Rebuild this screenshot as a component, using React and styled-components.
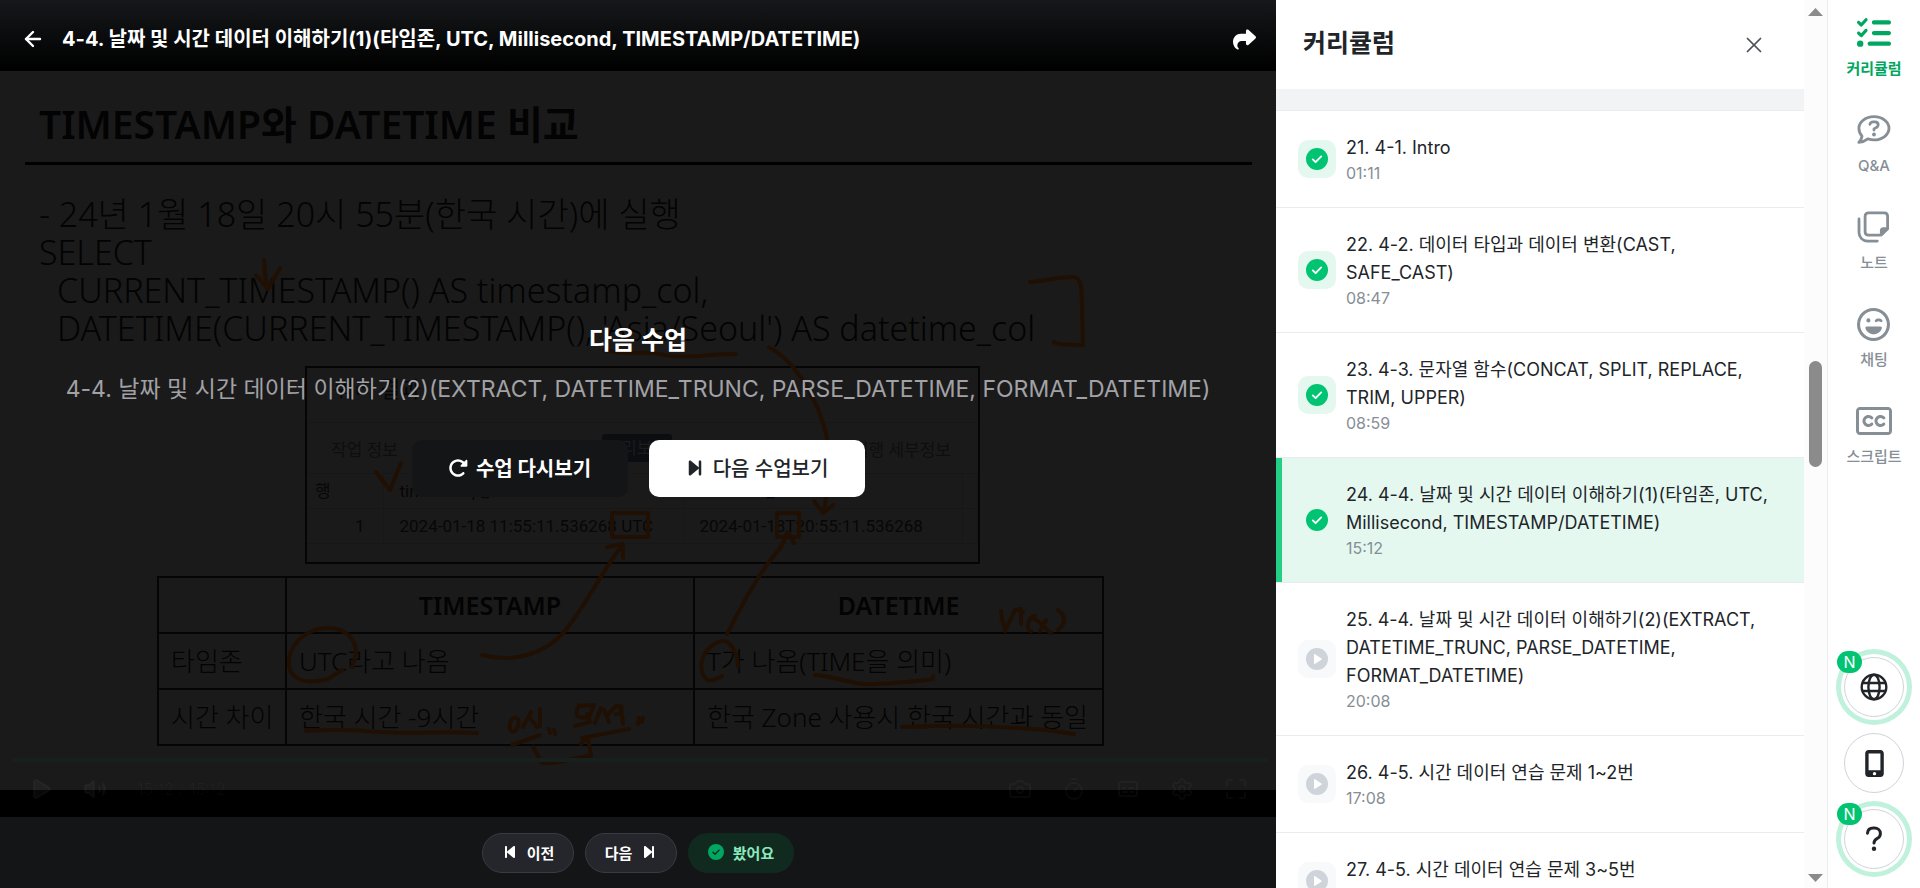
import React from "react";
import styled, { createGlobalStyle, css } from "styled-components";
import {
  FaBackwardStep,
  FaForwardStep,
  FaListCheck,
  FaMobileScreenButton,
  FaRegClosedCaptioning,
  FaRegFaceLaughWink,
  FaRotateRight,
  FaShare,
} from "react-icons/fa6";
import { ArrowLeft, Camera, Captions, Maximize, Play, Settings, Timer, Volume2, X } from "lucide-react";

const GlobalStyle = createGlobalStyle`
  * { box-sizing: border-box; }
  body {
    margin: 0;
    background: #fff;
    color: #212529;
    font-family: Inter, "Noto Sans CJK KR", sans-serif;
    overflow: hidden;
  }
  button { font: inherit; color: inherit; border: 0; padding: 0; background: none; cursor: pointer; }
  h1, h2, p, ul { margin: 0; padding: 0; }
  ul { list-style: none; }
  a { color: inherit; text-decoration: none; }
  svg { display: block; flex: none; }
`;

const Page = styled.div`
  display: flex;
  height: 100vh;
`;

/* ---------- player ---------- */

const Player = styled.main`
  flex: 1;
  min-width: 0;
  display: flex;
  flex-direction: column;
  background: #000;
`;

const TopBar = styled.header`
  flex: none;
  height: 71px;
  padding: 7px 20px 0 21px;
  display: flex;
  align-items: center;
  gap: 17px;
  color: #fff;
  background: linear-gradient(#15171a, #000);
`;

const LessonTitle = styled.h1`
  flex: 1;
  font-size: 20px;
  line-height: 28px;
  font-weight: 700;
  white-space: nowrap;
`;

const Stage = styled.section`
  position: relative;
  flex: 1;
  min-height: 0;
  overflow: hidden;
  padding-bottom: 27px;
`;

const Slide = styled.div`
  height: 100%;
  padding: 24px 24px 0 25px;
  background: #1a1a1a;
  color: #030303;
  font-family: "Noto Sans", "Noto Sans CJK KR", sans-serif;
  overflow: hidden;
`;

const SlideTitle = styled.h2`
  height: 70px;
  padding: 0 14px;
  border-bottom: 3px solid #000;
  font-size: 39px;
  line-height: 58px;
  font-weight: 600;
  white-space: nowrap;
`;

const Query = styled.div`
  margin: 30px 14px 0;
  font-size: 34px;
  line-height: 38px;
  font-weight: 300;
  white-space: pre;
`;

const QueryLine = styled.p`
  padding-left: ${(p) => (p.$indent ? "18px" : 0)};
`;

const ResultPanel = styled.div`
  width: 675px;
  height: 198px;
  margin: 19px 0 0 280px;
  border: 2px solid #050505;
  font-family: Roboto, "Noto Sans CJK KR", sans-serif;
  font-size: 17px;
  color: #070707;
`;

const ResultTitle = styled.p`
  height: 55px;
  padding: 4px 27px;
  font-size: 22px;
  line-height: 36px;
  border-bottom: 1px solid #171717;
`;

const ResultTabs = styled.div`
  height: 50px;
  padding: 0 27px 0 24px;
  display: flex;
  align-items: center;
  color: #0e0e0e;
`;

const ActiveTab = styled.span`
  width: 70px;
  margin: 0 auto 0 204px;
  line-height: 28px;
  text-align: center;
  border-radius: 3px;
  background: #0b0d10;
  color: #1a1c1f;
`;

const ResultTable = styled.table`
  width: 100%;
  table-layout: fixed;
  border-collapse: collapse;
  line-height: 24px;
  th, td {
    height: 35px;
    padding: 0 0 0 16px;
    border: 1px solid #171717;
    border-left: 0;
    font-weight: 400;
    text-align: left;
    white-space: nowrap;
  }
  th:first-child { padding-left: 8px; }
  td:first-child { text-align: right; padding-right: 18px; }
`;

const CompareTable = styled.table`
  width: 946px;
  margin: 12px 0 0 132px;
  table-layout: fixed;
  border-collapse: collapse;
  font-size: 26px;
  line-height: 36px;
  th, td {
    height: 56px;
    padding: 0 12px;
    border: 2px solid #050505;
    font-weight: 300;
    text-align: left;
    white-space: nowrap;
  }
  thead th { font-weight: 600; font-size: 25px; text-align: center; }
`;

const Handwriting = styled.svg`
  position: absolute;
  left: 0;
  top: 0;
  fill: none;
  stroke: #201003;
  stroke-width: 4;
  stroke-linecap: round;
  stroke-linejoin: round;
`;

const Controls = styled.div`
  position: absolute;
  left: 13px;
  right: 8px;
  bottom: 12px;
  color: rgba(255, 255, 255, 0.03);
`;

const Progress = styled.div`
  height: 4px;
  margin-bottom: 11px;
  background: #18201d;
`;

const ControlRow = styled.div`
  display: flex;
  align-items: center;
  gap: 30px;
  height: 32px;
  padding: 0 20px 0 16px;
  font-size: 16px;
`;

const Spacer = styled.span`
  flex: 1;
`;

const NextLesson = styled.div`
  position: absolute;
  inset: 0;
  display: flex;
  flex-direction: column;
  align-items: center;
  padding-top: 250px;
  white-space: nowrap;
`;

const NextHeading = styled.h2`
  font-size: 25px;
  line-height: 38px;
  font-weight: 700;
  color: #fff;
`;

const NextTitle = styled.p`
  margin-top: 12px;
  font-size: 23px;
  line-height: 36px;
  color: #a1a1a6;
`;

const NextActions = styled.div`
  display: flex;
  gap: 21px;
  margin-top: 33px;
`;

const ActionButton = styled.button`
  width: 216px;
  height: 57px;
  padding-bottom: 2px;
  display: flex;
  align-items: center;
  justify-content: center;
  gap: 8px;
  border-radius: 10px;
  font-size: 20px;
  font-weight: ${(p) => (p.$light ? 500 : 700)};
  color: ${(p) => (p.$light ? "#212529" : "#fff")};
  background: ${(p) => (p.$light ? "#fff" : "#141517")};
`;

const BottomBar = styled.footer`
  flex: none;
  height: 71px;
  display: flex;
  justify-content: center;
  align-items: flex-start;
  gap: 11px;
  padding-top: 16px;
  background: #141517;
`;

const PillButton = styled.button`
  width: ${(p) => (p.$done ? 106 : 92)}px;
  height: 40px;
  padding-bottom: 2px;
  display: flex;
  align-items: center;
  justify-content: center;
  gap: 9px;
  border-radius: 20px;
  font-size: 15px;
  font-weight: 700;
  ${(p) =>
    p.$done
      ? css`
          color: #8ce9be;
          background: #112a20;
        `
      : css`
          border: 1px solid #3a3b42;
          color: #fff;
          background: #25262b;
        `}
`;

/* ---------- curriculum ---------- */

const Sidebar = styled.aside`
  flex: none;
  width: 552px;
  display: flex;
  border-right: 1px solid #e9ecef;
  background: #fff;
`;

const Curriculum = styled.div`
  flex: 1;
  min-width: 0;
  display: flex;
  flex-direction: column;
`;

const CurriculumHeader = styled.div`
  flex: none;
  height: 89px;
  padding: 0 37px 0 27px;
  display: flex;
  align-items: center;
  justify-content: space-between;
`;

const CurriculumTitle = styled.h2`
  padding-bottom: 3px;
  font-size: 25px;
  line-height: 36px;
  font-weight: 700;
`;

const CloseButton = styled.button`
  color: #495057;
`;

const LessonList = styled.ul`
  flex: 1;
  min-height: 0;
  overflow: hidden;
  border-top: 21px solid #f1f3f5;
`;

const Lesson = styled.li`
  border-top: 1px solid #e9ecef;
  ${(p) =>
    p.$current &&
    css`
      background: #e5f8f0;
      box-shadow: inset 6px 0 #22cf85;
    `}
`;

const LessonLink = styled.a`
  display: flex;
  align-items: center;
  gap: 10px;
  padding: 23px 32px 23px 22px;
`;

const StatusBox = styled.span`
  flex: none;
  width: 38px;
  height: 38px;
  display: grid;
  place-items: center;
  border-radius: 10px;
  background: ${(p) => (p.$done ? "#e5f8f0" : "#f8f9fa")};
`;

const LessonName = styled.p`
  font-size: 18px;
  line-height: 28px;
`;

const Duration = styled.p`
  min-height: 22px;
  font-size: 16px;
  line-height: 22px;
  color: #868e96;
`;

const ScrollTrack = styled.div`
  flex: none;
  width: 23px;
  padding: 8px 0 6px;
  display: flex;
  flex-direction: column;
  align-items: center;
  background: #fcfcfc;
`;

const ScrollRoom = styled.div`
  width: 13px;
  flex: 1;
  display: flex;
  flex-direction: column;
  &::before { content: ""; flex: 345; }
  &::after { content: ""; flex: 407; }
`;

const ScrollThumb = styled.div`
  flex: 106;
  border-radius: 7px;
  background: #8b8b8b;
`;

/* ---------- right rail ---------- */

const Rail = styled.nav`
  flex: none;
  width: 92px;
  display: flex;
  flex-direction: column;
  align-items: center;
  justify-content: space-between;
  padding: 15px 0 19px;
`;

const RailGroup = styled.div`
  display: flex;
  flex-direction: column;
  align-items: center;
  gap: ${(p) => p.$gap}px;
`;

const RailButton = styled.button`
  display: flex;
  flex-direction: column;
  align-items: center;
  gap: 7px;
  font-size: 15px;
  line-height: 22px;
  font-weight: ${(p) => (p.$active ? 700 : 500)};
  color: ${(p) => (p.$active ? "#00a760" : "#868e96")};
`;

const RailIcon = styled.span`
  width: 36px;
  height: 36px;
  display: grid;
  place-items: center;
`;

const RoundButton = styled.button`
  position: relative;
  width: 60px;
  height: 60px;
  display: grid;
  place-items: center;
  border: 1px solid #ced4da;
  border-radius: 50%;
  background: #fff;
  ${(p) =>
    p.$isNew &&
    css`
      box-shadow: 0 0 0 3px #fff, 0 0 0 8px #c0f1dc;
    `}
`;

const NewBadge = styled.span`
  position: absolute;
  left: -8px;
  top: -7px;
  width: 25px;
  height: 22px;
  border-radius: 11px;
  font-size: 16px;
  line-height: 22px;
  text-align: center;
  color: #fff;
  background: #00c471;
`;

/* ---------- icons ---------- */

const CheckCircle = ({ size = 22, color = "#00c471", mark = "#fff" }) => (
  <svg width={size} height={size} viewBox="0 0 22 22" fill="none">
    <circle cx="11" cy="11" r="11" fill={color} />
    <path d="M6.8 11.4l2.8 2.8 5.6-5.8" stroke={mark} strokeWidth="1.9" strokeLinecap="round" strokeLinejoin="round" />
  </svg>
);

const PlayCircle = () => (
  <svg width="22" height="22" viewBox="0 0 22 22">
    <circle cx="11" cy="11" r="11" fill="#ced4da" />
    <path d="M8 6.800v8.400c0 .6.6.9 1.100.6l6.300-4.100c.5-.3.5-1 0-1.300l-6.300-4.200c-.5-.3-1.100 0-1.100.6z" fill="#fff" />
  </svg>
);

const QuestionBubble = () => (
  <svg width="34" height="30" viewBox="0 0 34 30" fill="none" stroke="currentColor" strokeWidth="2.800" strokeLinecap="round" strokeLinejoin="round">
    <path d="M17 1.700c8.300 0 15 5.100 15 11.600s-6.700 11.600-15 11.600c-2.200 0-4.300-.4-6.200-1.100-2.200 1.700-5.300 3.400-9 3.600 1.600-1.700 2.900-3.900 3.200-6.200C3.100 19 1.900 16.300 1.900 13.300 1.900 6.800 8.700 1.700 17 1.700z" />
    <path d="M12.900 9.300c.4-1.700 1.500-2.500 3.200-2.500h1.700c2 0 3.400 1.200 3.400 2.900 0 1.300-.6 2.100-1.700 2.700L17 13.900v1.200" />
    <circle cx="17" cy="19.500" r="1.900" fill="currentColor" stroke="none" />
  </svg>
);

const NotesIcon = () => (
  <svg width="33" height="32" viewBox="0 0 33 32" fill="none" stroke="currentColor" strokeWidth="2.800" strokeLinecap="round" strokeLinejoin="round">
    <path d="M11.500 1.900h15.700c2 0 3.400 1.400 3.400 3.400v12.500l-6.500 6.300H11.500c-2 0-3.400-1.400-3.400-3.400V5.300c0-2 1.400-3.400 3.400-3.400z" />
    <path d="M30.200 17.700h-3.700c-1.300 0-2.200.9-2.200 2.200v3.700z" fill="currentColor" />
    <path d="M2 7.900v13.700c0 4.700 3.700 8.500 8.500 8.500h9.800" />
  </svg>
);

const GlobeIcon = () => (
  <svg width="28" height="28" viewBox="0 0 28 28" fill="none" stroke="currentColor" strokeWidth="2.400">
    <circle cx="14" cy="14" r="12.300" />
    <ellipse cx="14" cy="14" rx="5.600" ry="12.300" />
    <path d="M2.500 10h23M2.500 18h23" />
  </svg>
);

const QuestionMark = () => (
  <svg width="18" height="26" viewBox="0 0 18 26" fill="none" stroke="currentColor" strokeWidth="3" strokeLinecap="round" strokeLinejoin="round">
    <path d="M2.500 7.200C2.800 4 5 2.100 8.200 2.100h1.200c3.400 0 6 2.200 6 5.300 0 2.300-1 3.700-2.900 4.900-2.200 1.400-3.500 2.200-3.500 4.700" />
    <circle cx="9" cy="22.800" r="2.200" fill="currentColor" stroke="none" />
  </svg>
);

const ScrollArrow = ({ down }) => (
  <svg width="15" height="8" viewBox="0 0 15 8" fill="#8b8b8b">
    <path d={down ? "M0 0h15L7.500 8z" : "M7.500 0L15 8H0z"} />
  </svg>
);

const Annotations = () => (
  <Handwriting width="1276" height="746" viewBox="0 71 1276 746">
    <path d="M264 260C265 270 264 276 268 289M256 275l12 14 12-21" />
    <path d="M1030 282c17-1 31-6 44-5 8 1 8 14 8 30l1 38c-10 0-26 0-29-3" />
    <path d="M604 350c26 6 42 0 60 5 20 4 43-1 72-1" />
    <path d="M769 347c33 18 57 70 60 105 3 26-3 40-5 60M814 501l9 12 10-8" />
    <path d="M376 472l14 18 11-27" />
    <path d="M612 513h36v24h-36zM777 513h22v24h-22z" />
    <path d="M482 655c31 8 62 0 83-24 22-27 38-62 57-85M607 547l16-3v14" />
    <path d="M727 634c17-33 29-55 45-76 7-9 14-17 15-26M780 549l8-17 6 11" />
    <path d="M352 667c12-26-7-40-26-39-22 1-38 18-37 36 1 18 20 20 39 15l14-9" />
    <path d="M738 666c-1-15-8-26-16-25-11 2-24 15-20 31 4 12 11 9 20 4" />
    <path d="M815 675c21 1 38 11 62 9 21-1 42-3 56-5v-3" />
    <path d="M306 731c26-2 51-1 74 1 34 2 64-1 97 1" />
    <path d="M902 727c50-3 121-1 172 7" />
    <path d="M1001 611c0 8 3 13 4 20l10-21 6-1v15M1019 610l4 2M1035 616c-8 1-9 14-4 15M1034 619c7 2 10 9 17 14M1046 620l-6 11M1058 610c8 6 8 13 0 20" />
    <path d="M512 719c-5 8-1 15 3 12 6-6 4-17-3-12M531 712l-8 15M530 718l7 9M540 709v17M549 729l1 4M554 730l1 4M512 745l28-10M533 747l9 16c17 2 34-7 49-7l-3-19-7 7M582 738l47-9" />
    <path d="M579 705c-5 11-3 14 10 12l5-12-14 1M575 726l15-4-3-8M601 708l-6 15M604 710l5 12M608 714l8-8c7-1 6 10 0 8M621 706l2 18M639 718l-1 6M643 718l-1 4" />
  </Handwriting>
);

/* ---------- data ---------- */

const lessons = [
  { name: "21. 4-1. Intro", time: "01:11", done: true },
  { name: "22. 4-2. 데이터 타입과 데이터 변환(CAST, SAFE_CAST)", time: "08:47", done: true },
  { name: "23. 4-3. 문자열 함수(CONCAT, SPLIT, REPLACE, TRIM, UPPER)", time: "08:59", done: true },
  { name: "24. 4-4. 날짜 및 시간 데이터 이해하기(1)(타임존, UTC, Millisecond, TIMESTAMP/DATETIME)", time: "15:12", done: true, current: true },
  { name: "25. 4-4. 날짜 및 시간 데이터 이해하기(2)(EXTRACT, DATETIME_TRUNC, PARSE_DATETIME, FORMAT_DATETIME)", time: "20:08" },
  { name: "26. 4-5. 시간 데이터 연습 문제 1~2번", time: "17:08" },
  { name: "27. 4-5. 시간 데이터 연습 문제 3~5번" },
];

const railItems = [
  { label: "커리큘럼", icon: <FaListCheck size={34} />, active: true },
  { label: "Q&A", icon: <QuestionBubble /> },
  { label: "노트", icon: <NotesIcon /> },
  { label: "채팅", icon: <FaRegFaceLaughWink size={33} /> },
  { label: "스크립트", icon: <FaRegClosedCaptioning size={36} /> },
];

export default function App() {
  return (
    <Page>
      <GlobalStyle />
      <Player>
        <TopBar>
          <button aria-label="뒤로"><ArrowLeft size={24} strokeWidth={2.4} /></button>
          <LessonTitle>4-4. 날짜 및 시간 데이터 이해하기(1)(타임존, UTC, Millisecond, TIMESTAMP/DATETIME)</LessonTitle>
          <button aria-label="공유"><FaShare size={23} /></button>
        </TopBar>
        <Stage>
          <Slide>
            <SlideTitle>TIMESTAMP와 DATETIME 비교</SlideTitle>
            <Query>
              <QueryLine>- 24년 1월 18일 20시 55분(한국 시간)에 실행</QueryLine>
              <QueryLine>SELECT</QueryLine>
              <QueryLine $indent>CURRENT_TIMESTAMP() AS timestamp_col,</QueryLine>
              <QueryLine $indent>DATETIME(CURRENT_TIMESTAMP(), 'Asia/Seoul') AS datetime_col</QueryLine>
            </Query>
            <ResultPanel>
              <ResultTitle>쿼리 결과</ResultTitle>
              <ResultTabs>
                <span>작업 정보</span>
                <ActiveTab>미리보기</ActiveTab>
                <span>실행 세부정보</span>
              </ResultTabs>
              <ResultTable>
                <colgroup>
                  <col width="76" />
                  <col width="300" />
                  <col width="279" />
                  <col />
                </colgroup>
                <thead>
                  <tr><th>행</th><th>timestamp_col</th><th>datetime_col</th><th /></tr>
                </thead>
                <tbody>
                  <tr><td>1</td><td>2024-01-18 11:55:11.536268 UTC</td><td>2024-01-18T20:55:11.536268</td><td /></tr>
                </tbody>
              </ResultTable>
            </ResultPanel>
            <CompareTable>
              <colgroup>
                <col width="128" />
                <col width="408" />
                <col width="409" />
              </colgroup>
              <thead>
                <tr><th /><th>TIMESTAMP</th><th>DATETIME</th></tr>
              </thead>
              <tbody>
                <tr><td>타임존</td><td>UTC라고 나옴</td><td>T가 나옴(TIME을 의미)</td></tr>
                <tr><td>시간 차이</td><td>한국 시간 -9시간</td><td>한국 Zone 사용시 한국 시간과 동일</td></tr>
              </tbody>
            </CompareTable>
          </Slide>
          <Annotations />
          <Controls>
            <Progress />
            <ControlRow>
              <Play size={24} fill="currentColor" />
              <Volume2 size={24} fill="currentColor" />
              <span>15:12 / 15:12</span>
              <Spacer />
              <Camera size={24} />
              <Timer size={24} />
              <Captions size={24} />
              <Settings size={24} />
              <Maximize size={24} />
            </ControlRow>
          </Controls>
          <NextLesson>
            <NextHeading>다음 수업</NextHeading>
            <NextTitle>4-4. 날짜 및 시간 데이터 이해하기(2)(EXTRACT, DATETIME_TRUNC, PARSE_DATETIME, FORMAT_DATETIME)</NextTitle>
            <NextActions>
              <ActionButton><FaRotateRight size={20} />수업 다시보기</ActionButton>
              <ActionButton $light><FaForwardStep size={20} />다음 수업보기</ActionButton>
            </NextActions>
          </NextLesson>
        </Stage>
        <BottomBar>
          <PillButton><FaBackwardStep size={16} />이전</PillButton>
          <PillButton>다음<FaForwardStep size={16} /></PillButton>
          <PillButton $done><CheckCircle size={16} color="#00a760" mark="#112a20" />봤어요</PillButton>
        </BottomBar>
      </Player>

      <Sidebar>
        <Curriculum>
          <CurriculumHeader>
            <CurriculumTitle>커리큘럼</CurriculumTitle>
            <CloseButton aria-label="닫기"><X size={26} strokeWidth={1.6} /></CloseButton>
          </CurriculumHeader>
          <LessonList>
            {lessons.map((l) => (
              <Lesson key={l.name} $current={l.current}>
                <LessonLink href="#">
                  <StatusBox $done={l.done}>{l.done ? <CheckCircle /> : <PlayCircle />}</StatusBox>
                  <div>
                    <LessonName>{l.name}</LessonName>
                    <Duration>{l.time}</Duration>
                  </div>
                </LessonLink>
              </Lesson>
            ))}
          </LessonList>
        </Curriculum>
        <ScrollTrack aria-hidden="true">
          <ScrollArrow />
          <ScrollRoom><ScrollThumb /></ScrollRoom>
          <ScrollArrow down />
        </ScrollTrack>
      </Sidebar>

      <Rail>
        <RailGroup $gap={32}>
          {railItems.map((r) => (
            <RailButton key={r.label} $active={r.active}>
              <RailIcon>{r.icon}</RailIcon>
              {r.label}
            </RailButton>
          ))}
        </RailGroup>
        <RailGroup $gap={16}>
          <RoundButton $isNew aria-label="언어"><GlobeIcon /><NewBadge>N</NewBadge></RoundButton>
          <RoundButton aria-label="모바일"><FaMobileScreenButton size={27} /></RoundButton>
          <RoundButton $isNew aria-label="도움말"><QuestionMark /><NewBadge>N</NewBadge></RoundButton>
        </RailGroup>
      </Rail>
    </Page>
  );
}
